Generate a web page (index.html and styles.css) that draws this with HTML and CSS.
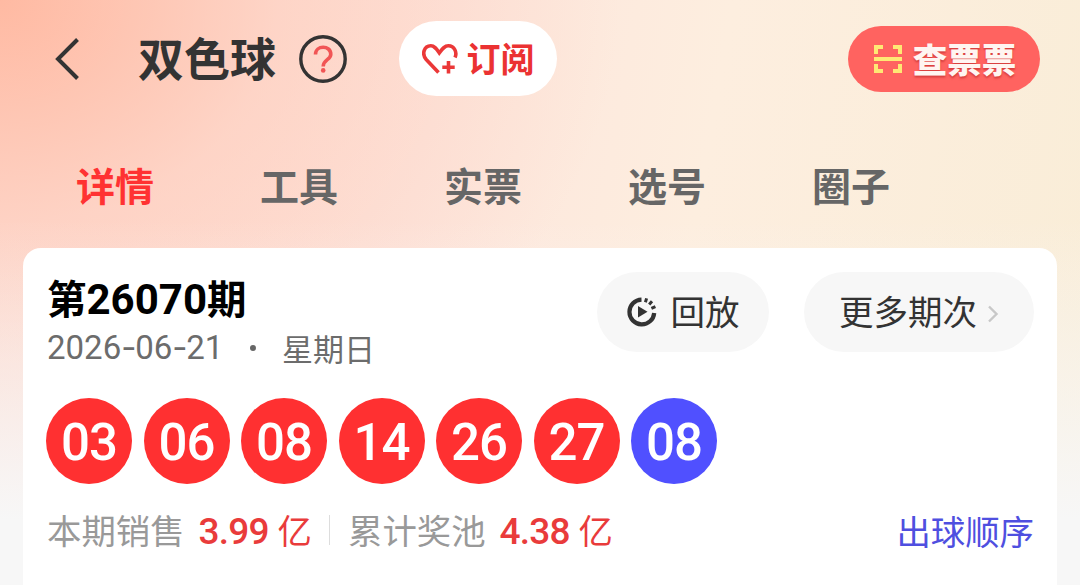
FILE: index.html
```
<!DOCTYPE html>
<html lang="zh-CN">
<head>
    <meta charset="UTF-8">
    <meta name="viewport" content="width=device-width, initial-scale=1.0">
    <title>双色球</title>
    <link rel="stylesheet" href="styles.css">
</head>
<body>
    <div class="page">
        <header class="header">
            <svg class="back-icon" viewBox="0 0 26 44"><path d="M23.5 2.5 L4 22 L23.5 41.5"/></svg>
            <h1 class="title">双色球</h1>
            <svg class="help-icon" viewBox="0 0 48 48">
                <circle class="help-ring" cx="24" cy="24" r="22.2"/>
                <path class="help-mark" d="M16.5 19.5 C16.5 9.8 31.8 10 31.8 19.2 C31.8 25 24.2 24.5 24.2 31.5"/>
                <circle class="help-dot" cx="24.2" cy="35.4" r="2.3"/>
            </svg>
            <button class="subscribe-btn">
                <svg class="heart-icon" viewBox="0 0 36 32">
                    <path d="M16.5 29.5 L4.2 16.5 C-0.5 11 2 2.8 8.8 2.8 C12.6 2.8 14.5 6 17.3 10 C20.3 6 22.4 2.8 26.4 2.8 C32.4 2.8 35.4 9.5 33 14.6"/>
                    <path d="M26.5 18 V30.4 M20.3 24.2 H32.7"/>
                </svg>
                <span>订阅</span>
            </button>
            <button class="check-btn">
                <svg class="scan-icon" viewBox="0 0 28 28">
                    <path d="M2 9 V2 H9 M19 2 H26 V9 M26 19 V26 H19 M9 26 H2 V19 M0 14 H28"/>
                </svg>
                <span>查票票</span>
            </button>
        </header>

        <nav class="tabs">
            <a class="tab active">详情</a>
            <a class="tab">工具</a>
            <a class="tab">实票</a>
            <a class="tab">选号</a>
            <a class="tab">圈子</a>
        </nav>

        <main class="card">
            <div class="card-top">
                <div class="issue">
                    <h2 class="issue-no">第<span class="num">26070</span>期</h2>
                    <div class="issue-date">
                        <span class="date">2026<i>-</i>06<i>-</i>21</span>
                        <span class="dot"></span>
                        <span>星期日</span>
                    </div>
                </div>
                <button class="pill replay">
                    <svg class="replay-icon" viewBox="0 0 30 30">
                        <path class="ring" d="M14.5 2.6 A12.4 12.4 0 1 0 27.2 16"/>
                        <path class="ticks" d="M18.4 5.2 L19.6 1.4 M22.2 7.4 L25 4.2 M24.4 11.4 L28.4 9.6"/>
                        <path class="play" d="M11 9 L20.5 14.8 L11 20.6 Z"/>
                    </svg>
                    <span>回放</span>
                </button>
                <button class="pill more">
                    <span>更多期次</span>
                    <svg class="more-icon" viewBox="0 0 12 18"><path d="M2 1.5 L9.5 9 L2 16.5"/></svg>
                </button>
            </div>

            <!-- Winning numbers -->
            <div class="balls">
                <span class="ball">03</span>
                <span class="ball">06</span>
                <span class="ball">08</span>
                <span class="ball">14</span>
                <span class="ball">26</span>
                <span class="ball">27</span>
                <span class="ball blue">08</span>
            </div>

            <div class="stats">
                <span class="label">本期销售</span>
                <span class="amount">3.99</span>
                <span class="unit">亿</span>
                <span class="divider"></span>
                <span class="label">累计奖池</span>
                <span class="amount">4.38</span>
                <span class="unit">亿</span>
                <a class="order-link">出球顺序</a>
            </div>
        </main>
    </div>
</body>
</html>
```
FILE: styles.css
```
* {
    box-sizing: border-box;
}

body {
    margin: 0;
    font-family: 'Noto Sans CJK SC', sans-serif;
    color: #333;
}

h1, h2 {
    margin: 0;
}

button {
    border: none;
    padding: 0;
    font-family: inherit;
    color: inherit;
}

svg {
    flex: none;
    fill: none;
}

.page {
    height: 585px;
    overflow: hidden;
    display: flex;
    flex-direction: column;
    background:
        linear-gradient(to bottom, rgba(247, 247, 247, 0) 220px, #f7f7f7 520px),
        radial-gradient(ellipse 620px 500px at 0 0, rgba(255, 184, 160, 0.95), rgba(255, 200, 182, 0.5) 45%, rgba(255, 225, 215, 0) 100%),
        linear-gradient(100deg, #fddbd1 0%, #fde5dc 38%, #fdeedf 62%, #f9edd7 100%);
}

/* Header */
.header {
    height: 117px;
    padding: 0 40px 0 54px;
    display: flex;
    align-items: center;
    flex: none;
}

.back-icon {
    width: 26px;
    height: 44px;
    stroke: #333;
    stroke-width: 4;
}

.title {
    margin-left: 58px;
    width: 161px;
    padding-bottom: 5px;
    font-size: 46px;
    line-height: 60px;
    font-weight: 600;
    white-space: nowrap;
}

.help-icon {
    width: 48px;
    height: 48px;
}

.help-ring {
    stroke: #333;
    stroke-width: 3.4;
}

.help-mark {
    stroke: #f15555;
    stroke-width: 3.6;
}

.help-dot {
    fill: #f15555;
}

.subscribe-btn {
    margin-left: 52px;
    width: 158px;
    height: 75px;
    border-radius: 38px;
    background: #fff;
    color: #eb3232;
    font-size: 34px;
    font-weight: 600;
    display: flex;
    align-items: center;
    justify-content: center;
    gap: 9px;
}

.subscribe-btn span {
    padding-bottom: 3px;
}

.check-btn span {
    padding-bottom: 1px;
}

.heart-icon {
    width: 36px;
    height: 32px;
    stroke: #eb3838;
    stroke-width: 3.6;
}

.check-btn {
    margin-left: auto;
    width: 192px;
    height: 66px;
    border-radius: 33px;
    background: #ff6360;
    color: #fff5f1;
    font-size: 34.5px;
    font-weight: 900;
    text-shadow: 0 2px 2px rgba(190, 40, 40, 0.6);
    display: flex;
    align-items: center;
    justify-content: center;
    gap: 11px;
}

.scan-icon {
    width: 28px;
    height: 28px;
    margin-left: 2px;
    stroke: #ffe874;
    stroke-width: 4;
}

/* Tabs */
.tabs {
    height: 131px;
    padding: 0 0 0 76px;
    display: flex;
    flex: none;
}

.tab {
    width: 184px;
    padding-top: 37px;
    font-size: 39px;
    line-height: 60px;
    font-weight: 600;
    color: #666;
}

.tab.active {
    color: #ff3232;
}

/* Card */
.card {
    flex: 1;
    margin: 0 23px;
    padding: 24px 23px 0 24px;
    background: #fff;
    border-radius: 18px 18px 0 0;
}

.card-top {
    display: flex;
    height: 126px;
}

.issue {
    width: 550px;
    margin-top: -1px;
}

.issue-no {
    font-size: 39.5px;
    line-height: 52px;
    font-weight: 700;
    color: #000;
}

.num {
    font-family: Roboto, sans-serif;
    font-size: 42px;
}

.issue-date {
    display: flex;
    align-items: center;
    font-size: 31px;
    line-height: 42px;
    color: #6c6c6c;
}

.date {
    width: 203px;
    font-family: Roboto, sans-serif;
    font-size: 33px;
    font-weight: 400;
}

.date i {
    display: inline-block;
    width: 14px;
    text-align: center;
    font-family: Inter, sans-serif;
    font-style: normal;
}

.dot {
    width: 6px;
    height: 6px;
    margin-right: 26px;
    border-radius: 50%;
    background: #666;
}

.pill {
    height: 80px;
    border-radius: 40px;
    background: #f7f7f7;
    font-size: 34.5px;
    font-weight: 400;
    display: flex;
    align-items: center;
    justify-content: center;
}

.pill span {
    padding-bottom: 4px;
}

.replay {
    width: 172px;
    gap: 14px;
}

.replay-icon {
    width: 30px;
    height: 30px;
}

.ring {
    stroke: #333;
    stroke-width: 4.2;
}

.ticks {
    stroke: #333;
    stroke-width: 3;
}

.play {
    fill: #333;
}

.more {
    width: 230px;
    margin-left: 35px;
    gap: 10px;
}

.more-icon {
    width: 12px;
    height: 18px;
    margin-top: 3px;
    stroke: #c8c8c8;
    stroke-width: 2.4;
}

.balls {
    display: flex;
    gap: 11.5px;
    margin-left: -1px;
}

.ball {
    width: 86px;
    height: 86px;
    border-radius: 50%;
    background: #ff3031;
    color: #fff;
    font-family: Roboto, sans-serif;
    font-size: 51px;
    line-height: 89px;
    font-weight: 500;
    letter-spacing: -1px;
    text-align: center;
}

.ball.blue {
    background: #5050ff;
}

.stats {
    margin-top: 16px;
    display: flex;
    align-items: center;
    font-size: 34.4px;
    line-height: 50px;
}

.label {
    color: #999;
    font-weight: 400;
}

.amount {
    width: 79px;
    margin-left: 14px;
    padding-top: 7px;
    font-family: Roboto, sans-serif;
    font-size: 37px;
    font-weight: 500;
    letter-spacing: -0.8px;
    color: #e93b3b;
}

.unit {
    color: #e93b3b;
}

.divider {
    width: 1px;
    height: 30px;
    margin: 2px 18px 0 17px;
    background: #ddd;
}

.order-link {
    margin-left: auto;
    padding-top: 2px;
    color: #4f4fe0;
}
```
